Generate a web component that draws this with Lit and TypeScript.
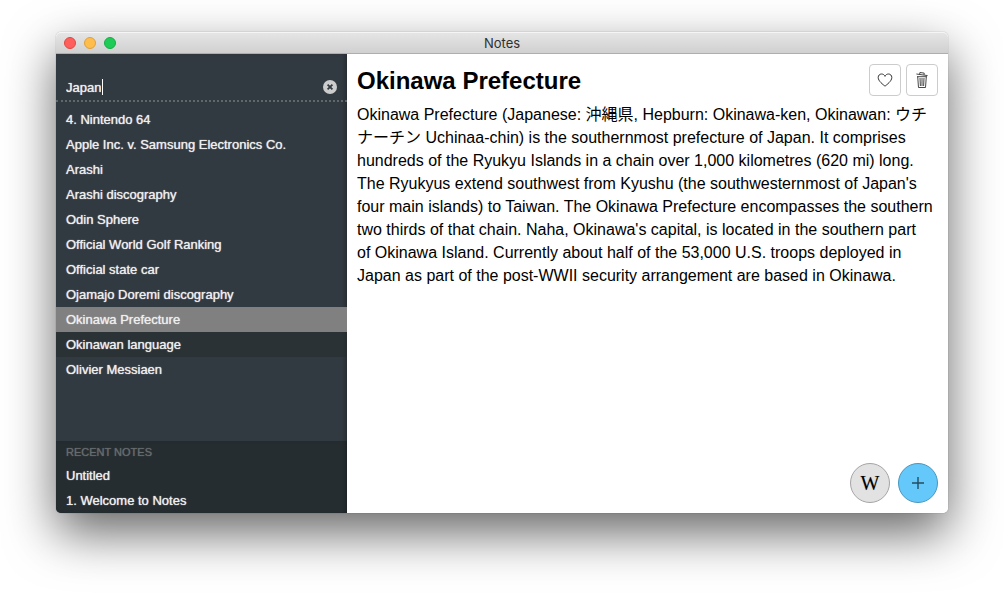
import { LitElement, html, css } from "lit";
import { customElement, state } from "lit/decorators.js";
import { classMap } from "lit/directives/class-map.js";

@customElement("app-root")
export class AppRoot extends LitElement {
  @state() private query = "Japan";
  @state() private selected = "Okinawa Prefecture";

  private results = [
    "4. Nintendo 64",
    "Apple Inc. v. Samsung Electronics Co.",
    "Arashi",
    "Arashi discography",
    "Odin Sphere",
    "Official World Golf Ranking",
    "Official state car",
    "Ojamajo Doremi discography",
    "Okinawa Prefecture",
    "Okinawan language",
    "Olivier Messiaen",
  ];
  private recent = ["Untitled", "1. Welcome to Notes"];

  static styles = css`
    :host {
      display: flex;
      box-sizing: border-box;
      min-height: 100vh;
      padding: 32px 56px 80px;
      background: #fff;
      overflow: hidden;
      font-family: "Liberation Sans", Arial, "Noto Sans CJK JP", sans-serif;
      color: #000;
    }
    * {
      box-sizing: border-box;
    }
    button,
    input {
      font: inherit;
      color: inherit;
      margin: 0;
      padding: 0;
    }
    .window {
      flex: 1;
      display: flex;
      flex-direction: column;
      min-width: 0;
      border-radius: 5px;
      box-shadow: 0 0 1px rgba(0, 0, 0, 0.5), 0 20px 50px rgba(0, 0, 0, 0.6);
    }
    .titlebar {
      display: grid;
      grid-template-columns: 1fr auto 1fr;
      align-items: center;
      height: 22px;
      padding: 0 8px;
      border-bottom: 1px solid #aeaeae;
      border-radius: 5px 5px 0 0;
      background: linear-gradient(#e6e6e6, #d0d0d0);
      box-shadow: inset 0 1px #f5f5f5;
    }
    .lights {
      display: flex;
      gap: 8px;
    }
    .light {
      width: 12px;
      height: 12px;
      border: 1px solid #e2463f;
      border-radius: 50%;
      background: #ff5f5c;
    }
    .light.min {
      border-color: #e0a03a;
      background: #ffbd4c;
    }
    .light.max {
      border-color: #14ae46;
      background: #1fcb57;
    }
    .title {
      margin: 0;
      font: 400 13px/20px Inter, "Liberation Sans", sans-serif;
      color: #303030;
    }
    .body {
      flex: 1;
      display: flex;
      min-height: 0;
    }
    .sidebar {
      flex: 0 0 291px;
      display: flex;
      flex-direction: column;
      overflow: hidden;
      border-radius: 0 0 0 5px;
      background: #323a41;
      box-shadow: inset -4px 0 4px -2px rgba(0, 0, 0, 0.25);
      color: #eee;
      font-size: 13px;
      line-height: 25px;
      text-shadow: 0 0 1px #eee;
    }
    .search {
      display: flex;
      align-items: center;
      height: 48px;
      padding: 20px 10px 0;
      border-bottom: 2px dotted #626869;
    }
    .field {
      flex: 1;
      display: flex;
      cursor: text;
    }
    .query {
      field-sizing: content;
      height: 16px;
      padding-right: 1px;
      border: 0;
      border-right: 1px solid #fff;
      outline: 0;
      background: none;
      caret-color: transparent;
      text-shadow: inherit;
    }
    .clear {
      display: flex;
      border: 0;
      background: none;
    }
    .list {
      margin: 0;
      padding: 0;
      list-style: none;
    }
    .results {
      flex: 1;
      padding-top: 5px;
    }
    .note {
      display: block;
      width: 100%;
      height: 25px;
      padding: 0 10px;
      border: 0;
      background: none;
      text-align: left;
      text-shadow: inherit;
    }
    .note.hovered {
      background: rgba(38, 45, 46, 0.6);
    }
    .note.selected {
      background: #808080;
    }
    .recent {
      background: #262d30;
      box-shadow: inset -4px 0 4px -2px rgba(0, 0, 0, 0.25);
    }
    .heading {
      margin: 0;
      padding: 0 10px;
      font-size: 11px;
      line-height: 22px;
      font-weight: 400;
      text-transform: uppercase;
      color: #666b6d;
      text-shadow: 0 0 1px #666b6d;
    }
    .main {
      flex: 1;
      display: flex;
      flex-direction: column;
      min-width: 0;
      padding: 10px;
      border-radius: 0 0 5px 0;
      background: #fff;
    }
    .top {
      display: flex;
      gap: 5px;
    }
    .name {
      flex: 1;
      margin: 0;
      font-size: 24px;
      line-height: 34px;
    }
    .tool {
      display: grid;
      place-items: center;
      width: 32px;
      height: 32px;
      border: 1px solid #ccc;
      border-radius: 4px;
      background: #fff;
    }
    .text {
      flex: 1;
      margin: 5px 0 0;
      padding-right: 5px;
      font-size: 16px;
      line-height: 23px;
    }
    .actions {
      display: flex;
      justify-content: flex-end;
      gap: 8px;
    }
    .round {
      display: grid;
      place-items: center;
      width: 40px;
      height: 40px;
      border: 1px solid #a5a5a5;
      border-radius: 50%;
      background: #e2e2e2;
      font: 20px/38px "Liberation Serif", serif;
    }
    .round.add {
      border-color: #4a97bd;
      background: #64c8fb;
    }
    .round.wiki {
      text-shadow: 0 0 1px rgba(0, 0, 0, 0.3);
    }
  `;

  private item(name: string, hovered = false) {
    return html`<li>
      <button
        class=${classMap({ note: true, selected: name === this.selected, hovered })}
        @click=${() => (this.selected = name)}
      >${name}</button>
    </li>`;
  }

  render() {
    return html`
      <div class="window">
        <header class="titlebar">
          <div class="lights">
            <button class="light" aria-label="Close"></button>
            <button class="light min" aria-label="Minimize"></button>
            <button class="light max" aria-label="Zoom"></button>
          </div>
          <p class="title">Notes</p>
        </header>
        <div class="body">
          <nav class="sidebar">
            <div class="search">
              <label class="field">
                <input
                  class="query"
                  aria-label="Search notes"
                  .value=${this.query}
                  @input=${(e: Event) => (this.query = (e.target as HTMLInputElement).value)}
                />
              </label>
              <button class="clear" aria-label="Clear search" @click=${() => (this.query = "")}>
                <svg width="14" height="14" viewBox="0 0 14 14">
                  <circle cx="7" cy="7" r="7" fill="#ccc" />
                  <path d="M4.6 4.6l4.8 4.8M9.4 4.6L4.6 9.4" stroke="#323a41" stroke-width="1.8" />
                </svg>
              </button>
            </div>
            <ul class="list results">
              ${this.results.map((n) => this.item(n, n === "Okinawan language"))}
            </ul>
            <section class="recent">
              <h2 class="heading">Recent notes</h2>
              <ul class="list">
                ${this.recent.map((n) => this.item(n))}
              </ul>
            </section>
          </nav>
          <main class="main">
            <div class="top">
              <h1 class="name">Okinawa Prefecture</h1>
              <button class="tool" aria-label="Favorite">
                <svg width="16" height="14" viewBox="0 0 16 14" fill="none" stroke="#333">
                  <path d="M8 13.2C6.2 11.6 1.2 8.2 1.2 4.5C1.2 2.4 2.7 1 4.5 1C6.1 1 7.4 1.9 8 3.4C8.6 1.9 9.9 1 11.5 1C13.3 1 14.8 2.4 14.8 4.5C14.8 8.2 9.8 11.6 8 13.2Z" />
                </svg>
              </button>
              <button class="tool" aria-label="Delete">
                <svg width="14" height="18" viewBox="0 0 14 18" fill="none" stroke="#333" stroke-width="0.9">
                  <path d="M1.4 3L12.6 4.6M4.6 3.3L4.9 1.5L9.2 2.1L9 3.9" />
                  <path d="M2 5.7H12M2.7 5.7L3.5 16.5H10.5L11.3 5.7M5 7L5.4 15M7 7V15M9 7L8.6 15" />
                </svg>
              </button>
            </div>
            <p class="text" lang="ja">Okinawa Prefecture (Japanese: 沖縄県, Hepburn: Okinawa-ken, Okinawan: ウチナーチン Uchinaa-chin) is the southernmost prefecture of Japan. It comprises hundreds of the Ryukyu Islands in a chain over 1,000 kilometres (620 mi) long. The Ryukyus extend southwest from Kyushu (the southwesternmost of Japan's four main islands) to Taiwan. The Okinawa Prefecture encompasses the southern two thirds of that chain. Naha, Okinawa's capital, is located in the southern part of Okinawa Island. Currently about half of the 53,000 U.S. troops deployed in Japan as part of the post-WWII security arrangement are based in Okinawa.</p>
            <div class="actions">
              <button class="round wiki" aria-label="Search Wikipedia">W</button>
              <button class="round add" aria-label="New note">
                <svg width="12" height="12" viewBox="0 0 12 12">
                  <path d="M6 0V12M0 6H12" stroke="#234c60" stroke-width="1.4" />
                </svg>
              </button>
            </div>
          </main>
        </div>
      </div>
    `;
  }
}
